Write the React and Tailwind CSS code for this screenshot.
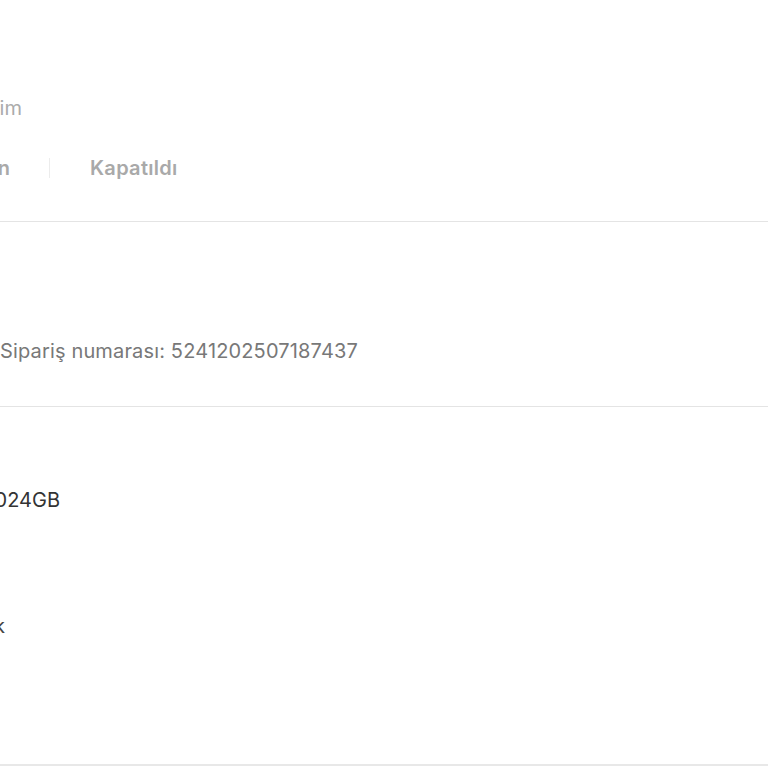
export default function App() {
  return (
    <div className="w-[768px] h-[768px] overflow-hidden bg-white font-['Inter','Liberation_Sans',sans-serif]">
      {/* Header: title + status tabs */}
      <section className="h-[222px] border-b border-[#e4e4e4] pt-[96px]">
        <div className="flex w-[22px] justify-end whitespace-nowrap text-[20px] leading-[24px] text-[#ababab]">
          Siparişlerim
        </div>
        <div className="mt-[36px] flex items-center whitespace-nowrap text-[20px] font-semibold leading-[24px] text-[#a9a9a9]">
          <div className="flex w-[10px] justify-end">Tamamlanan</div>
          <span className="ml-[39px] h-[20px] w-px bg-[#ececec]" />
          <span className="ml-[40px] tracking-[0.3px]">Kapatıldı</span>
        </div>
      </section>

      {/* Order number */}
      <section className="h-[185px] border-b border-[#e4e4e4] pt-[117px]">
        <p className="whitespace-nowrap text-[20px] leading-[24px] tracking-[0.15px] text-[#787878]">
          Sipariş numarası: 5241202507187437
        </p>
      </section>

      {/* Product */}
      <section className="h-[359px] border-b-2 border-[#e8e8e8] pt-[81px]">
        <div className="flex w-[60px] justify-end whitespace-nowrap text-[20px] leading-[24px] text-[#333333]">
          Apple iPhone 16 Pro Max 1024GB
        </div>
        <div className="mt-[102px] flex w-[5px] justify-end whitespace-nowrap text-[20px] leading-[24px] text-[#444444]">
          Siyah renk
        </div>
      </section>
    </div>
  );
}
